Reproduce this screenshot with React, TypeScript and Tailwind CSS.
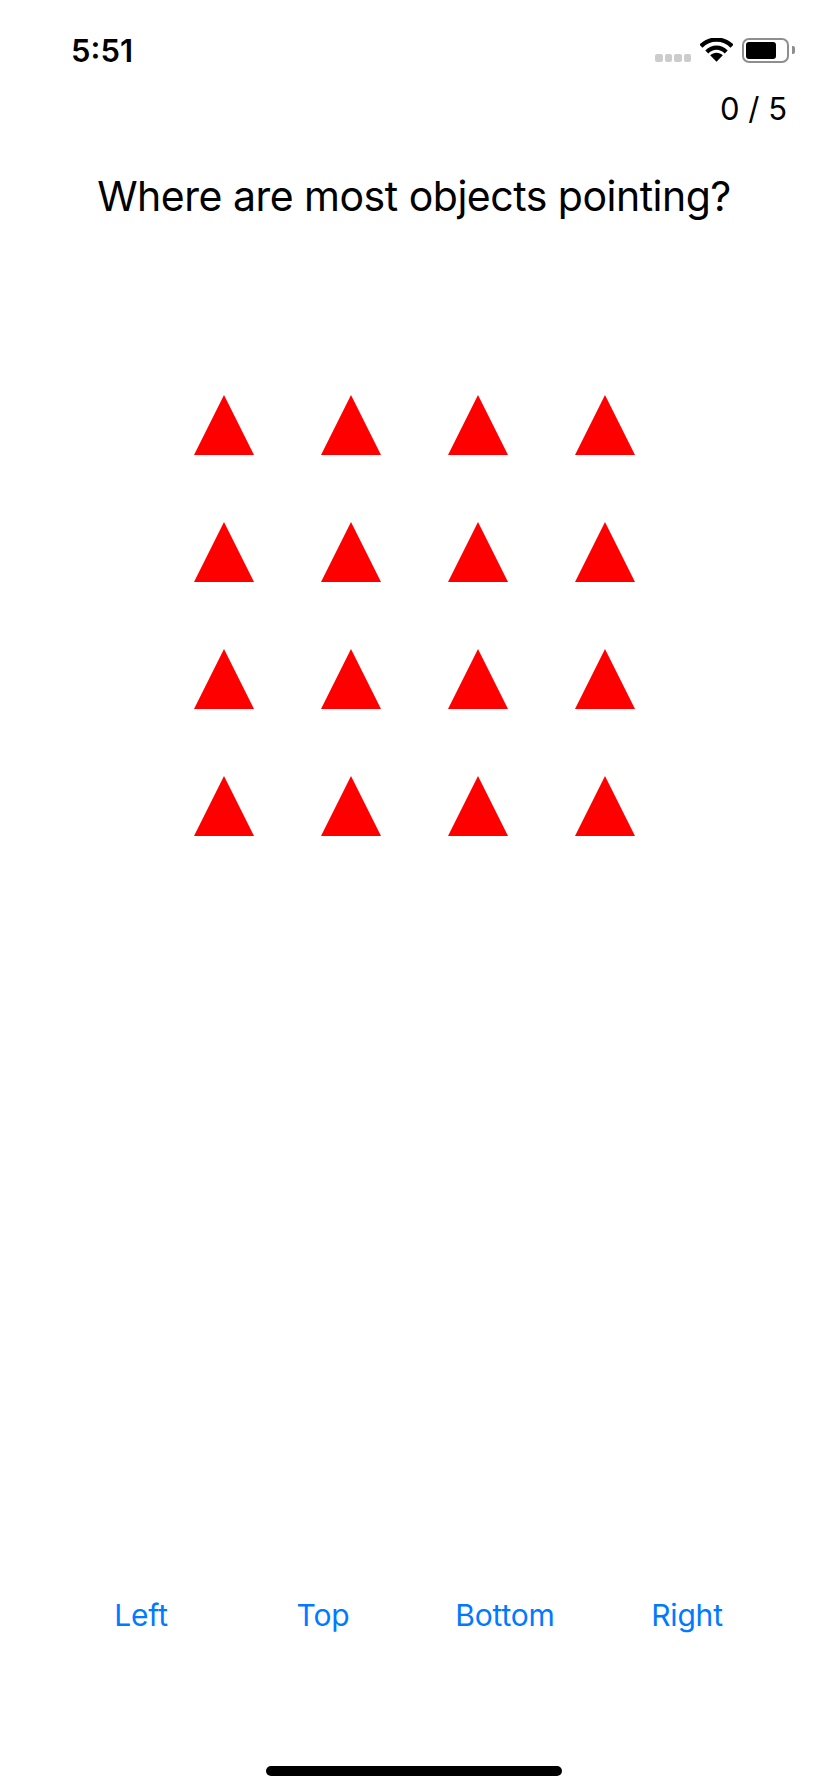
const ROWS = [0, 1, 2, 3];
const COLS = [0, 1, 2, 3];
const ANSWERS = ["Left", "Top", "Bottom", "Right"];

function Triangle() {
  return (
    <svg width="60" height="60" viewBox="0 0 60 60" className="block">
      <polygon points="30,0 60,60 0,60" fill="#ff0000" />
    </svg>
  );
}

function StatusIcons() {
  return (
    <div className="flex items-center">
      <div className="flex gap-[2px] mt-[16px] mr-[9px]">
        {[0, 1, 2, 3].map((i) => (
          <span key={i} className="w-[7.5px] h-[8px] rounded-[2px] bg-[#cccccc]" />
        ))}
      </div>
      <svg width="33" height="24" viewBox="0 0 34 24" className="block">
        <path d="M1 8 C10 -1 24 -1 33 8" fill="none" stroke="#000" strokeWidth="4.4" />
        <path d="M7 14 C13 8 21 8 27 14" fill="none" stroke="#000" strokeWidth="4.4" />
        <path d="M17 24 L10.5 17.5 C14 14 20 14 23.5 17.5 Z" fill="#000" />
      </svg>
      <div className="ml-[9px] w-[47px] h-[25px] rounded-[7px] border-2 border-[#8e8e8e] p-[2px] pr-[11px]">
        <div className="w-full h-full rounded-[3px] bg-black" />
      </div>
      <div className="ml-[3px] w-[3px] h-[8px] rounded-r-[2px] bg-[#8e8e8e]" />
    </div>
  );
}

export default function App() {
  return (
    <div className="w-[828px] h-[1792px] bg-white flex flex-col font-['Inter','Noto_Sans',sans-serif] text-black">
      <div className="flex justify-between items-center h-[52px] mt-[24px] pl-[71px] pr-[33px]">
        <span className="text-[31px] font-semibold leading-none">5:51</span>
        <StatusIcons />
      </div>

      <div className="flex justify-end pr-[41px] mt-[13px]">
        <span className="text-[31px] leading-[40px]">0 / 5</span>
      </div>

      <h1 className="text-center text-[41px] font-normal leading-[48px] tracking-[-0.5px] mt-[43px]">
        Where are most objects pointing?
      </h1>

      <div className="flex flex-col gap-[67px] mt-[175px] pl-[194px]">
        {ROWS.map((r) => (
          <div key={r} className="flex gap-[67px]">
            {COLS.map((c) => (
              <Triangle key={c} />
            ))}
          </div>
        ))}
      </div>

      <div className="mt-auto grid grid-cols-4 px-[50px]">
        {ANSWERS.map((a) => (
          <button key={a} className="text-[30px] leading-[36px] tracking-[-0.2px] text-[#007aff] text-center">
            {a}
          </button>
        ))}
      </div>

      <div className="flex justify-center mt-[133px] pb-[16px]">
        <div className="w-[296px] h-[10px] rounded-full bg-black" />
      </div>
    </div>
  );
}
